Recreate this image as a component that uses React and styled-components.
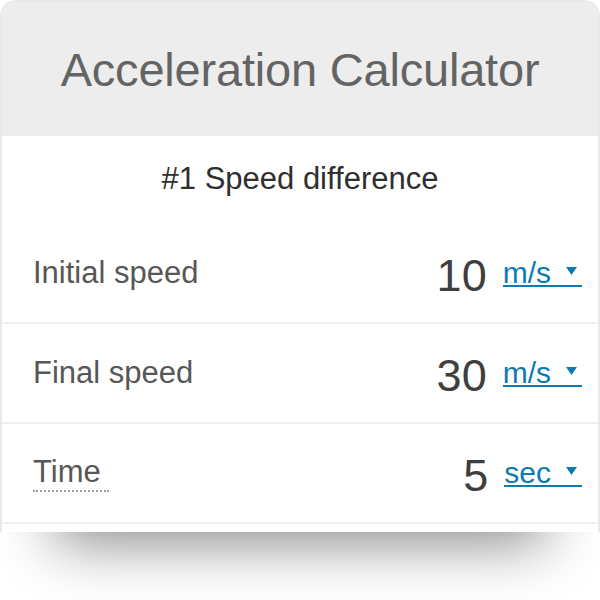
import React from 'react'
import styled, { createGlobalStyle } from 'styled-components'

const GlobalStyle = createGlobalStyle`
  html, body {
    margin: 0;
    padding: 0;
    background: #fff;
  }
  body {
    font-family: "Liberation Sans", Arial, Helvetica, sans-serif;
  }
`

const fields = [
  { label: 'Initial speed', value: '10', unit: 'm/s' },
  { label: 'Final speed', value: '30', unit: 'm/s' },
  { label: 'Time', value: '5', unit: 'sec', hint: true },
]

function Caret() {
  return (
    <CaretIcon width="11" height="8" viewBox="0 0 11 8">
      <path d="M0 0 H11 L5.5 8 Z" fill="currentColor" />
    </CaretIcon>
  )
}

function Field({ field }) {
  return (
    <Row>
      <Label>
        {field.hint ? <Hint>{field.label}</Hint> : field.label}
      </Label>
      <Value>{field.value}</Value>
      <Unit>
        <span>{field.unit}</span>
        <Caret />
      </Unit>
    </Row>
  )
}

export default function App() {
  return (
    <>
      <GlobalStyle />
      <Page>
        <Card>
          <Header>
            <Title>Acceleration Calculator</Title>
          </Header>
          <Section>#1 Speed difference</Section>
          {fields.map((f) => (
            <Field key={f.label} field={f} />
          ))}
        </Card>
        <Shadow />
      </Page>
    </>
  )
}

const Page = styled.div`
  width: 600px;
  height: 600px;
  overflow: hidden;
  display: flex;
  flex-direction: column;
`

const Card = styled.div`
  box-sizing: border-box;
  height: 532px;
  flex-shrink: 0;
  border: 2px solid #e8e8e8;
  border-bottom: none;
  border-radius: 16px 16px 0 0;
  background: #fff;
  overflow: hidden;
  display: flex;
  flex-direction: column;
`

const Header = styled.div`
  height: 134px;
  flex-shrink: 0;
  background: #ededed;
  display: flex;
  align-items: center;
  justify-content: center;
`

const Title = styled.h1`
  margin: 0;
  font-size: 47px;
  font-weight: normal;
  letter-spacing: -0.2px;
  color: #646464;
`

const Section = styled.h2`
  margin: 0;
  height: 88px;
  flex-shrink: 0;
  box-sizing: border-box;
  padding-bottom: 3px;
  display: flex;
  align-items: center;
  justify-content: center;
  font-size: 31px;
  font-weight: normal;
  color: #2f2f2f;
`

const Row = styled.div`
  height: 98px;
  flex-shrink: 0;
  border-bottom: 2px solid #efefef;
  display: flex;
  align-items: center;
  padding: 0 16px 0 31px;
`

const Label = styled.div`
  flex: 1;
  font-size: 31px;
  color: #575757;
`

const Hint = styled.span`
  display: inline-block;
  padding-right: 8px;
  border-bottom: 2px dotted #9a9a9a;
`

const Value = styled.div`
  margin-top: 5px;
  margin-right: 16px;
  font-size: 45px;
  color: #3e3e3e;
`

const Unit = styled.div`
  display: inline-flex;
  align-items: flex-start;
  gap: 15px;
  padding-right: 5px;
  font-size: 30px;
  line-height: 25px;
  color: #0d7ab5;
  border-bottom: 2px solid #0d7ab5;
  cursor: pointer;
`

const CaretIcon = styled.svg`
  margin-top: 7px;
  flex-shrink: 0;
`

const Shadow = styled.div`
  position: relative;
  flex: 1;
  overflow: hidden;
  background: #fff;

  &::before {
    content: '';
    position: absolute;
    left: 55px;
    right: 55px;
    top: -80px;
    height: 80px;
    box-shadow: 0 10px 60px rgba(0, 0, 0, 0.48);
  }
`
